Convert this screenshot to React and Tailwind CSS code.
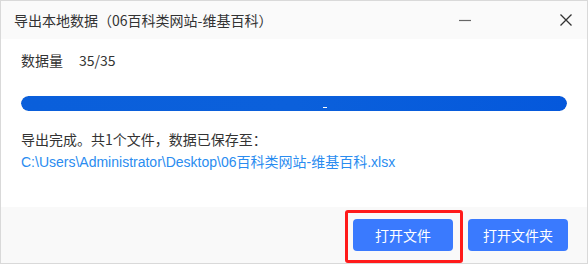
import React from 'react';

const FONT = '"Noto Sans CJK SC", "Noto Sans", sans-serif';
const LINK_FONT = '"Liberation Sans", "Noto Sans CJK SC", sans-serif';

const Progress = ({ value = 100 }) => (
  <div className="relative mt-[26px] h-[15px] w-full rounded-full bg-[#e8e8e8] overflow-hidden">
    <div
      className="h-full rounded-full bg-gradient-to-r from-[#0a5fdb] via-[#0b60db] to-[#0558dc]"
      style={{ width: `${value}%` }}
    />
    <span className="absolute left-[302px] top-[11px] h-px w-[4px] bg-white" />
  </div>
);

export default function App() {
  return (
    <div className="w-[588px] h-[264px] border border-[#d9d9d9] flex flex-col text-[#333]" style={{ fontFamily: FONT }}>
      {/* Title bar */}
      <div className="h-[38px] bg-[#fafafa] flex items-center justify-between pl-[13px] pr-[15px]">
        <span className="text-[14px] text-[#333]">导出本地数据（06百科类网站-维基百科）</span>
        <div className="flex items-center gap-[89px]">
          <svg width="12" height="12" viewBox="0 0 12 12">
            <path d="M0 6.5h12" stroke="#666" strokeWidth="1.2" />
          </svg>
          <svg width="12" height="12" viewBox="0 0 12 12">
            <path d="M0.5 0.5l11 11M11.5 0.5l-11 11" stroke="#333" strokeWidth="1.3" />
          </svg>
        </div>
      </div>

      {/* Body */}
      <div className="flex-1 bg-white px-[20px] pt-[11px]">
        <div className="flex text-[14px] leading-[20px]">
          <span>数据量</span>
          <span className="ml-[16px]">35/35</span>
        </div>
        <Progress value={100} />
        <div className="mt-[17px] text-[14px] leading-[23px]">
          <div>导出完成。共1个文件，数据已保存至：</div>
          <div className="text-[#2a8cf0]" style={{ fontFamily: LINK_FONT }}>
            C:\Users\Administrator\Desktop\06百科类网站-维基百科.xlsx
          </div>
        </div>
      </div>

      {/* Footer */}
      <div className="h-[56px] bg-[#f9f9f9] flex items-center justify-end gap-[15px] pr-[19px]">
        <div className="relative">
          <button className="w-[100px] h-[32px] rounded-[4px] bg-[#3a7afe] text-white text-[14px]">打开文件</button>
          <span className="absolute -left-[8px] -top-[9px] w-[118px] h-[53px] border-[3px] border-[#ff1a1a] rounded-[3px] pointer-events-none" />
        </div>
        <button className="w-[100px] h-[32px] rounded-[4px] bg-[#3a7afe] text-white text-[14px]">打开文件夹</button>
      </div>
    </div>
  );
}
